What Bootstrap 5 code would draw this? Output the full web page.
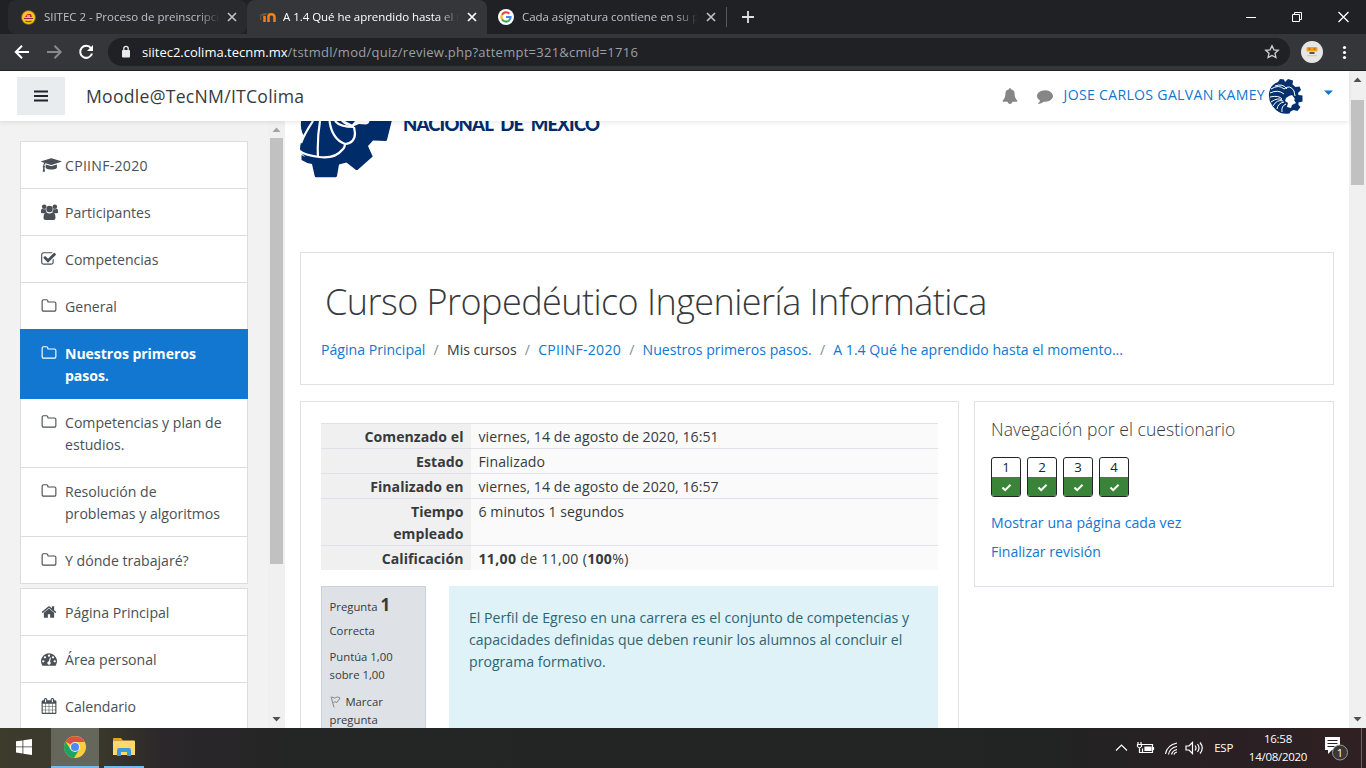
<!DOCTYPE html>
<html lang="es">
<head>
<meta charset="utf-8">
<meta name="viewport" content="width=device-width, initial-scale=1">
<title>A 1.4 Qué he aprendido hasta el momento</title>
<link href="https://cdn.jsdelivr.net/npm/bootstrap@5.3.0/dist/css/bootstrap.min.css" rel="stylesheet">
<style>
body{font-family:"Open Sans","Noto Sans",sans-serif;font-size:14.1px;line-height:22px;color:#373a3c;width:1366px;height:768px;overflow:hidden;background:#fff}
a{color:#1177d1;text-decoration:none}
.fa{width:16px;height:16px;fill:currentColor;flex:none;overflow:visible}
/* browser window */
.tabstrip{height:34px;background:#202124;padding-left:8px;color:#fff}
.tab{width:239px;height:34px;padding:0 10px 0 13px;border-radius:8px 8px 0 0;font-size:11.5px;color:#bdc1c6;letter-spacing:-.04px}
.tab.hov{background:#292a2d;border-radius:8px}
.tab.act{background:#35363a;color:#fff;width:240px}
.tab svg{flex:none}
.tab .ttl{white-space:nowrap;overflow:hidden;width:177px;margin-left:7px;-webkit-mask-image:linear-gradient(90deg,#000 154px,transparent 176px);mask-image:linear-gradient(90deg,#000 154px,transparent 176px)}
.toolbar{height:37px;background:#35363a;border-bottom:1px solid #232326}
.omni{height:28px;width:1182px;margin-left:13px;border-radius:14px;background:#202124;font-size:13px;color:#9aa0a6;padding:0 10px 0 12px}
.url{margin-left:10px;letter-spacing:.26px}
.omni b{font-weight:400;color:#fff;letter-spacing:0}
.viewport{height:657px}
/* moodle navbar */
.topnav{height:50px;width:1349px;background:#fff;box-shadow:0 2px 4px rgba(0,0,0,.08);position:relative;z-index:2;padding-left:17px}
.burger{width:48px;height:38px;background:#e9ecef;color:#212529}
.site{font-size:17.6px;color:#373a3c;margin-left:21px;letter-spacing:.27px}
.user{letter-spacing:.3px}
.content{height:607px;overflow:hidden}
/* scrollbars */
.sbar{width:17px;background:#f0f0f0;flex:none}
.sbar i{display:block;width:13px;background:#c1c1c1}
.arr{height:17px;flex:none}
/* drawer */
.drawer{width:285px;background:#f2f2f2;flex:none}
.drawer nav{width:228px;margin:20px 20px 0 20px;flex:none}
.menu{--bs-list-group-border-radius:0;--bs-list-group-border-color:#dcdddf;--bs-list-group-color:#495057;--bs-list-group-active-bg:#1177d1;--bs-list-group-active-border-color:#1177d1;border-radius:0}
.menu .list-group-item{padding:13px 20px 11px 20px;display:flex;border-radius:0}
.menu .list-group-item.active{font-weight:700;margin-top:-1px;color:#fff;letter-spacing:-.06px}
.menu .fa{margin-right:8px;margin-top:2px}
.code{letter-spacing:.27px}
.panel{border:1px solid #dee2e6}
.main-col{width:1064px;padding:0 15px}
.ctitle{font-size:36px;font-weight:300;line-height:44px;letter-spacing:-.55px;color:#373a3c;padding-left:24px}
.crumb{padding-left:20px}
.crumb span{white-space:nowrap}
.crumb .sep{color:#868e96;padding:0 8.2px}
.qtable{width:617px;table-layout:fixed;border-collapse:collapse}
.qtable th{width:150px;background:#f0f0f0;text-align:right;vertical-align:top;padding:2px 7.5px 0;border-top:1px solid #dee2e6;letter-spacing:.05px}
.qtable td{background:#fafafa;padding:2px 7.5px 0;vertical-align:top;border-top:1px solid #dee2e6;letter-spacing:.05px}
.qtable tr{height:25px}
.qinfo{width:105px;height:160px;background:#dee2e6;border:1px solid #cad0d7;padding:10px 7.5px;font-size:11.3px;line-height:18px}
.qinfo b{font-size:17px;line-height:16px}
.qtext{width:489px;height:160px;background:#def2f8;color:#2f6473;padding:21px 0 0 20px;letter-spacing:.02px}
.navh{font-size:17.5px;font-weight:300;letter-spacing:.06px;line-height:24px}
.qn{width:30px;height:40px;border:1px solid #212529;border-radius:3px;overflow:hidden;text-align:center;line-height:19px;font-size:13.2px;color:#212529}
.qn .ok{height:20px;background:#398439;display:flex;align-items:center;justify-content:center}
/* taskbar */
.taskbar{height:40px;color:#fff;background:linear-gradient(90deg,#3d3b2c 0,#3a382c 100px,#2b272a 165px,#242525 300px,#222323 1050px,#292023 1220px,#302024 1366px)}
.tbtn{width:48px;height:40px;border-bottom:2px solid transparent}
.clock{font-size:11.5px;line-height:18px;letter-spacing:-.27px;text-align:center;width:62px}
</style>
</head>
<body>
<svg class="d-none">
<symbol id="folder" viewBox="0 0 1792 1792"><path d="M1600 1312v-704q0-40-28-68t-68-28h-704q-40 0-68-28t-28-68v-64q0-40-28-68t-68-28h-320q-40 0-68 28t-28 68v960q0 40 28 68t68 28h1216q40 0 68-28t28-68zm128-704v704q0 92-66 158t-158 66h-1216q-92 0-158-66t-66-158v-960q0-92 66-158t158-66h320q92 0 158 66t66 158v32h672q92 0 158 66t66 158z"/></symbol>
<symbol id="close" viewBox="0 0 10 10"><path d="M1 1l8 8M9 1l-8 8" stroke="currentColor" stroke-width="1.7"/></symbol>
<symbol id="up" viewBox="0 0 17 17"><path d="M4.500 11h8L8.500 6.500z"/></symbol>
<symbol id="check" viewBox="0 0 12 10"><path d="M1.500 5l3 3 6-6" fill="none" stroke="#fff" stroke-width="2.200"/></symbol>
</svg>

<header>
  <div class="tabstrip d-flex align-items-center">
    <div class="tab hov d-flex align-items-center">
      <svg width="15" height="15" viewBox="0 0 15 15"><circle cx="7.500" cy="7.500" r="7" fill="#f6c51c" stroke="#7b4a2d" stroke-width=".8"/><path d="M4 7l2.500-3h3.500l1 3z" fill="#d2232a"/><path d="M3 8.500h9M4.500 11q3 1.500 6 0" stroke="#8b2252" stroke-width="1.100" fill="none"/><path d="M6 6h3" stroke="#fff"/></svg>
      <span class="ttl" style="margin-left:8px;width:176px">SIITEC 2 - Proceso de preinscripción</span>
      <svg class="ms-auto" width="10" height="10"><use href="#close"/></svg>
    </div>
    <div class="tab act d-flex align-items-center">
      <svg width="16" height="16" viewBox="0 0 16 16"><path d="M4.500 13V7M8.500 13V7.500q0-2.200 2.900-2.200T14.500 8v5" fill="none" stroke="#f98012" stroke-width="2.500"/><path d="M0 5.500l5-1.500 3 1-4.500 2z" fill="#6b5a4c"/><path d="M.7 6v5" stroke="#6b5a4c"/></svg>
      <span class="ttl" style="width:176px">A 1.4 Qué he aprendido hasta el momento</span>
      <svg class="ms-auto" width="10" height="10"><use href="#close"/></svg>
    </div>
    <div class="tab d-flex align-items-center" style="padding-left:11px">
      <svg width="16" height="16" viewBox="0 0 16 16"><circle cx="8" cy="8" r="8" fill="#fff"/><g fill="none" stroke-width="2.100"><path d="M11.300 4.700A4.600 4.600 0 0 0 4 5.700" stroke="#ea4335"/><path d="M4 5.700a4.600 4.600 0 0 0 0 4.600" stroke="#fbbc05"/><path d="M4 10.300a4.600 4.600 0 0 0 7 1.200" stroke="#34a853"/><path d="M11 11.500A4.600 4.600 0 0 0 12.600 8H8" stroke="#4285f4"/></g></svg>
      <span class="ttl" style="margin-left:8px">Cada asignatura contiene en su plan</span>
      <svg class="ms-auto" width="10" height="10"><use href="#close"/></svg>
    </div>
    <svg width="40" height="20" viewBox="0 0 40 20" fill="none"><path d="M.5 0v20" stroke="#55575b"/><path d="M22 4v12M16 10h12" stroke="#dfe1e5" stroke-width="1.800"/></svg>
    <svg class="ms-auto me-3" width="104" height="12" viewBox="0 0 104 12" fill="none" stroke="#fff"><path d="M0 6.500h10M46.500 3.500h7v7h-7zM48.500 3.500v-2h7v7h-2"/><path d="M92.500 1l10 10M102.500 1l-10 10" stroke-width="1.300"/></svg>
  </div>
  <div class="toolbar d-flex align-items-center">
    <svg width="95" height="18" viewBox="0 0 95 18" fill="none" stroke-width="2"><path d="M29 9H16.500M22 2.800L15.800 9l6.200 6.200" stroke="#fff"/><path d="M47 9h13M54.500 2.800L60.700 9l-6.200 6.200" stroke="#87898c"/><path d="M91 5.200A6 6 0 1 0 92 10.500" stroke="#fff"/><path d="M93 2v6h-6z" fill="#fff"/></svg>
    <div class="omni d-flex align-items-center">
      <svg width="12" height="14" viewBox="0 0 12 14"><rect x="2" y="5" width="8" height="7.500" rx="1" fill="#e8eaed"/><path d="M3.800 5V3.500a2.200 2.200 0 0 1 4.400 0V5" fill="none" stroke="#e8eaed" stroke-width="1.300"/></svg>
      <span class="text-nowrap url"><b>siitec2.colima.tecnm.mx</b>/tstmdl/mod/quiz/review.php?attempt=321&amp;cmid=1716</span>
      <svg class="ms-auto" width="16" height="16" viewBox="0 0 16 16"><path d="M8 1.800l1.900 4 4.400.5-3.300 3 .9 4.300L8 11.400l-3.900 2.200.9-4.300-3.300-3 4.400-.5z" fill="none" stroke="#d0d2d5" stroke-width="1.300"/></svg>
    </div>
    <svg class="ms-auto" style="margin-right:15px" width="50" height="22" viewBox="0 0 50 22"><circle cx="11" cy="11" r="11" fill="#e6e6e6"/><rect x="5.500" y="6" width="11" height="4.500" rx="1.500" fill="#f0a01e"/><path d="M7.500 8h2m3 0h2" stroke="#8d4c0b" stroke-width="1.200"/><path d="M8.500 12h5" stroke="#555" stroke-width="2"/><path d="M6 14.700h10" stroke="#f0c987" stroke-width="1.300"/><g fill="#fff"><circle cx="43.500" cy="6.500" r="1.600"/><circle cx="43.500" cy="11.500" r="1.600"/><circle cx="43.500" cy="16.500" r="1.600"/></g></svg>
  </div>
</header>

<div class="viewport d-flex">
  <div class="flex-grow-1">
    <nav class="topnav d-flex align-items-center">
      <div class="burger d-flex align-items-center justify-content-center"><svg width="14" height="12" viewBox="0 0 14 12"><path d="M.5 1.500h13M.5 6h13M.5 10.500h13" stroke="#212529" stroke-width="2" stroke-linecap="round"/></svg></div>
      <span class="site">Moodle@TecNM/ITColima</span>
      <div class="ms-auto d-flex align-items-center" style="padding-right:16px">
        <svg class="fa" style="color:#868686;margin-right:19px" viewBox="0 0 1792 1792"><path d="M1728 1408q0 52-38 90t-90 38h-448q0 106-75 181t-181 75-181-75-75-181h-448q-52 0-90-38t-38-90q50-42 91-88t85-119.500 74.500-158.500 50-206 19.500-260q0-152 117-282.500t307-158.500q-8-19-8-39 0-40 28-68t68-28 68 28 28 68q0 20-8 39 190 28 307 158.500t117 282.500q0 139 19.500 260t50 206 74.500 158.500 85 119.500 91 88z"/></svg>
        <svg class="fa" style="color:#868686;margin-right:11px" viewBox="0 0 1792 1792"><path d="M1792 896q0 174-120 321.500t-326 233-450 85.500q-70 0-145-8-198 175-460 242-49 14-114 22-17 2-30.500-9t-17.500-29v-1q-3-4-.5-12t2-10 4.500-9.500l6-9 7-8.500 8-9q7-8 31-34.500t34.500-38 31-39.500 32.500-51 27-59 26-76q-157-89-247.500-220t-90.500-281q0-130 71-248.500t191-204.500 286-136.500 348-50.500q244 0 450 85.500t326 233 120 321.500z"/></svg>
        <a class="user text-nowrap" href="#" style="margin-top:-3px">JOSE CARLOS GALVAN KAMEY</a>
        <svg style="margin-left:3px" width="35" height="36" viewBox="0 0 35 36"><path d="M10 4l2-3 4 .5L17 4l3-3 5 1.500-.5 4 3 2.500 4-.5L33 12l-3 3 .5 2 4 .5v6l-4 1 0 2.500 2 2-3 4-4-1-3 1.500-1 2Q14 37 8 32 0 25 1 15q1-8 9-11z" fill="#06316c"/><g fill="none" stroke="#fff" stroke-width="1"><path d="M3 11q8-5 13 0 6-5 10 2l1 5M2 15q8-4 14 1M2 19q9-2 12 2M3 24q7-5 11-2M5 28q4-7 10-5M9 31q1-6 7-7M14 34q-1-6 4-8M7 8q8-3 12 3"/></g><path d="M18 20l3-2 3-1 3 4-1 1 2 3-4 2-1 3-4-1 1-4-3-2z" fill="#fff"/></svg>
        <svg style="margin-left:21px;margin-top:-7px" width="9" height="6" viewBox="0 0 9 6"><path d="M0 .5h9L4.500 5z" fill="#1177d1"/></svg>
      </div>
    </nav>
    <div class="content d-flex">
      <aside class="drawer d-flex">
        <nav>
          <div class="list-group menu mb-1">
            <a class="list-group-item" href="#"><svg class="fa" viewBox="0 0 1792 1792"><path d="M1774 836l18 316q4 69-82 128t-235 93.500-323 34.500-323-34.500-235-93.500-82-128l18-316 574 181q22 7 48 7t48-7zm530-324q0 23-22 31l-1120 352q-4 1-10 1t-10-1l-652-206q-43 34-71 111.500t-34 178.500q63 36 63 109 0 69-58 107l58 433q2 14-8 25-9 11-24 11h-192q-15 0-24-11-10-11-8-25l58-433q-58-38-58-107 0-73 65-111 11-207 98-330l-333-104q-22-8-22-31t22-31l1120-352q4-1 10-1t10 1l1120 352q22 8 22 31z"/></svg><span class="code">CPIINF-2020</span></a>
            <a class="list-group-item" href="#"><svg class="fa" viewBox="0 0 16 16"><circle cx="3.200" cy="2.700" r="2.300"/><circle cx="13.800" cy="2.700" r="2.300"/><circle cx="8.500" cy="5" r="3.200"/><path d="M0 8.500V7q0-2.500 1.500-2.300 1.700 1 3.200.2Q4.600 7 6 8.300 4.500 8.300 3.500 9.200H1.200Q0 9.200 0 8.500zM17 8.500V7q0-2.500-1.500-2.300-1.700 1-3.200.2Q12.400 7 11 8.300q1.500 0 2.500.9h2.300q1.200 0 1.200-.7zM2.500 14q0-5.500 2.900-5.500 3.100 2 6.200 0 2.900 0 2.900 5.500 0 2-2 2h-8q-2 0-2-2z"/></svg><span>Participantes</span></a>
            <a class="list-group-item" href="#"><svg class="fa" viewBox="50 0 1792 1792"><path d="M1472 930v318q0 119-84.500 203.500t-203.500 84.500h-832q-119 0-203.500-84.500t-84.500-203.500v-832q0-119 84.500-203.500t203.500-84.500h832q63 0 117 25 15 7 18 23 3 17-9 29l-49 49q-10 10-23 10-3 0-9-2-23-6-45-6h-832q-66 0-113 47t-47 113v832q0 66 47 113t113 47h832q66 0 113-47t47-113v-254q0-13 9-22l64-64q10-10 23-10 6 0 12 3 20 8 20 29zm231-489l-814 814q-24 24-57 24t-57-24l-430-430q-24-24-24-57t24-57l110-110q24-24 57-24t57 24l263 263 647-647q24-24 57-24t57 24l110 110q24 24 24 57t-24 57z"/></svg><span>Competencias</span></a>
            <a class="list-group-item" href="#"><svg class="fa"><use href="#folder"/></svg><span>General</span></a>
            <a class="list-group-item active" href="#"><svg class="fa"><use href="#folder"/></svg><span>Nuestros primeros pasos.</span></a>
            <a class="list-group-item" href="#"><svg class="fa"><use href="#folder"/></svg><span>Competencias y plan de estudios.</span></a>
            <a class="list-group-item" href="#"><svg class="fa"><use href="#folder"/></svg><span>Resolución de<br>problemas y algoritmos</span></a>
            <a class="list-group-item" href="#"><svg class="fa"><use href="#folder"/></svg><span>Y dónde trabajaré?</span></a>
          </div>
          <div class="list-group menu">
            <a class="list-group-item" href="#"><svg class="fa" viewBox="0 0 1792 1792"><path d="M1472 992v480q0 26-19 45t-45 19h-384v-384h-256v384h-384q-26 0-45-19t-19-45v-480q0-1 .5-3t.5-3l575-474 575 474q1 2 1 6zm223-69l-62 74q-8 9-21 11h-3q-13 0-21-7l-692-577-692 577q-12 8-24 7-13-2-21-11l-62-74q-8-10-7-23.500t11-21.500l719-599q32-26 76-26t76 26l244 204v-195q0-14 9-23t23-9h192q14 0 23 9t9 23v408l219 182q10 8 11 21.500t-7 23.500z"/></svg><span>Página Principal</span></a>
            <a class="list-group-item" href="#"><svg class="fa" viewBox="0 0 1792 1792"><path d="M384 1152q0-53-37.500-90.500t-90.500-37.500-90.500 37.500-37.500 90.500 37.500 90.500 90.500 37.500 90.500-37.500 37.500-90.500zm192-448q0-53-37.500-90.500t-90.500-37.500-90.500 37.500-37.500 90.500 37.500 90.500 90.500 37.500 90.500-37.500 37.500-90.500zm428 481l101-382q6-26-7.500-48.500t-38.500-29.500-48 6.500-30 39.500l-101 382q-60 5-107 43.500t-63 98.500q-20 77 20 146t117 89 146-20 89-117q16-60-6-117t-72-91zm660-33q0-53-37.500-90.500t-90.500-37.500-90.500 37.500-37.500 90.500 37.500 90.500 90.500 37.500 90.500-37.500 37.500-90.500zm-640-640q0-53-37.500-90.500t-90.500-37.500-90.500 37.500-37.500 90.500 37.500 90.500 90.500 37.500 90.500-37.500 37.500-90.500zm448 192q0-53-37.500-90.500t-90.500-37.500-90.500 37.500-37.500 90.500 37.500 90.500 90.500 37.500 90.500-37.500 37.500-90.500zm320 448q0 261-141 483-19 29-54 29h-1402q-35 0-54-29-141-221-141-483 0-182 71-348t191-286 286-191 348-71 348 71 286 191 191 286 71 348z"/></svg><span>Área personal</span></a>
            <a class="list-group-item" href="#"><svg class="fa" viewBox="0 0 1792 1792"><path d="M192 1664h288v-288h-288v288zm352 0h320v-288h-320v288zm-352-352h288v-320h-288v320zm352 0h320v-320h-320v320zm-352-384h288v-288h-288v288zm736 736h320v-288h-320v288zm-384-736h320v-288h-320v288zm768 736h288v-288h-288v288zm-384-352h320v-320h-320v320zm-352-864v-288q0-13-9.500-22.500t-22.500-9.500h-64q-13 0-22.500 9.500t-9.500 22.500v288q0 13 9.500 22.500t22.500 9.500h64q13 0 22.500-9.500t9.500-22.500zm736 864h288v-320h-288v320zm-384-384h320v-288h-320v288zm384 0h288v-288h-288v288zm32-480v-288q0-13-9.500-22.500t-22.500-9.500h-64q-13 0-22.500 9.500t-9.500 22.500v288q0 13 9.500 22.500t22.500 9.500h64q13 0 22.500-9.500t9.500-22.500zm384-64v1280q0 52-38 90t-90 38h-1408q-52 0-90-38t-38-90v-1280q0-52 38-90t90-38h128v-96q0-66 47-113t113-47h64q66 0 113 47t47 113v96h384v-96q0-66 47-113t113-47h64q66 0 113 47t47 113v96h128q52 0 90 38t38 90z"/></svg><span>Calendario</span></a>
          </div>
        </nav>
        <div class="sbar d-flex flex-column align-items-center">
          <svg class="arr" width="17" fill="#a3a3a3"><use href="#up"/></svg>
          <i style="height:426px"></i>
          <svg class="arr mt-auto" width="17" fill="#505050" style="transform:rotate(180deg)"><use href="#up"/></svg>
        </div>
      </aside>
      <main class="main-col">
        <svg class="d-block" width="310" height="131" viewBox="0 0 310 131">
          <path d="M1 0H91.700L87 19Q86.500 20 85.500 20L73 19.500 68 25 72.700 35.500 57.500 49H56L46.500 41.500 39 43.500 37 55Q36.500 56.300 35.500 56.300H16Q15 56.300 14.700 55L12 43Q6 42 1.500 39V34Q8 38 2 33L0 28Q0 22 4 15 0 9 1 0z" fill="#002c6a"/>
          <g fill="none" stroke="#fff" stroke-width="2.200"><path d="M13 0Q5 12 1 22M0 30Q4 34 19 36 35 38 42 29 45 27 45 22M20 0Q17 18 18 36M29.500 0Q32 18 45 23 55 22 55 12L54 6M35 0Q40 6 54 6"/></g>
          <path d="M41 0H69.500Q69 3 66 3.500L59 3 53 5.500Q45 5 41 0z" fill="#fff"/><path d="M45 0h10l-3 3.500z" fill="#002c6a"/>
          <text x="103" y="10" textLength="197" font-family="Lato,sans-serif" font-weight="900" font-size="18.500" word-spacing="4" fill="#002c6a">NACIONAL DE MÉXICO</text>
        </svg>
        <div class="panel" style="height:133px;padding-top:27px">
          <h1 class="ctitle mb-0">Curso Propedéutico Ingeniería Informática</h1>
          <div class="crumb d-flex" style="margin-top:15px"><span><a href="#">Página Principal</a></span><span class="sep">/</span><span>Mis cursos</span><span class="sep">/</span><a class="code" href="#">CPIINF-2020</a><span class="sep">/</span><a href="#">Nuestros primeros pasos.</a><span class="sep">/</span><a href="#">A 1.4 Qué he aprendido hasta el momento...</a></div>
        </div>
        <div class="d-flex align-items-start" style="margin-top:16px;gap:15px">
          <section class="panel" style="width:659px;height:360px;padding:21px 20px">
            <table class="qtable">
              <tr><th>Comenzado el</th><td>viernes, 14 de agosto de 2020, 16:51</td></tr>
              <tr><th>Estado</th><td>Finalizado</td></tr>
              <tr><th>Finalizado en</th><td>viernes, 14 de agosto de 2020, 16:57</td></tr>
              <tr><th>Tiempo<br>empleado</th><td>6 minutos 1 segundos</td></tr>
              <tr style="height:24px"><th style="line-height:21px">Calificación</th><td style="letter-spacing:.3px;line-height:21px"><b>11,00</b> de 11,00 (<b>100</b>%)</td></tr>
            </table>
            <div class="d-flex" style="margin-top:16px;gap:23px">
              <div class="qinfo">
                <div>Pregunta <b>1</b></div>
                <div style="margin-top:6px">Correcta</div>
                <div style="margin-top:8px">Puntúa 1,00<br>sobre 1,00</div>
                <div style="margin-top:9px"><svg width="12" height="12" viewBox="0 0 12 12" fill="none" stroke="#868686" style="margin-right:1px"><path d="M1 .5l3 11M2 1q3 2 4 .5t4 .5L7 6.500q-2-1.500-3.500 0"/></svg> Marcar<br>pregunta</div>
              </div>
              <div class="qtext">El Perfil de Egreso en una carrera es el conjunto de competencias y<br>capacidades definidas que deben reunir los alumnos al concluir el<br>programa formativo.</div>
            </div>
          </section>
          <section class="panel" style="width:360px;height:186px;padding:15px 16px">
            <h2 class="navh mb-0">Navegación por el cuestionario</h2>
            <div class="d-flex" style="gap:6px;margin-top:16px">
              <div class="qn">1<div class="ok"><svg width="11" height="9"><use href="#check"/></svg></div></div>
              <div class="qn">2<div class="ok"><svg width="11" height="9"><use href="#check"/></svg></div></div>
              <div class="qn">3<div class="ok"><svg width="11" height="9"><use href="#check"/></svg></div></div>
              <div class="qn">4<div class="ok"><svg width="11" height="9"><use href="#check"/></svg></div></div>
            </div>
            <div style="margin-top:15px;letter-spacing:.06px"><a href="#">Mostrar una página cada vez</a></div>
            <div style="margin-top:7px"><a href="#">Finalizar revisión</a></div>
          </section>
        </div>
      </main>
    </div>
  </div>
  <div class="sbar d-flex flex-column align-items-center">
    <svg class="arr" width="17" fill="#505050"><use href="#up"/></svg>
    <i style="height:85px;margin-top:12px"></i>
    <svg class="arr mt-auto" width="17" fill="#505050" style="transform:rotate(180deg)"><use href="#up"/></svg>
  </div>
</div>

<footer class="taskbar d-flex align-items-center">
  <div class="tbtn d-flex align-items-center justify-content-center"><svg width="16" height="16" viewBox="0 0 16 16" fill="#fff"><path d="M0 2.300l6.500-.9v6.100H0zM7.300 1.300L16 0v7.500H7.300zM0 8.300h6.500v6.200L0 13.600zM7.300 8.300H16V16l-8.700-1.300z"/></svg></div>
  <div class="tbtn d-flex align-items-center justify-content-center" style="background:#66675b;border-color:#76b9ed;margin-left:3px"><svg width="22" height="22" viewBox="0 0 22 22"><circle cx="11" cy="11" r="11" fill="#ffcd40"/><path d="M11 11L1.500 5.500A11 11 0 0 1 20.600 6H11z" fill="#dd5144"/><path d="M1.500 5.500A11 11 0 0 0 10 22l5.300-8.500L11 11 6.500 13.500z" fill="#1da462"/><circle cx="11" cy="11" r="5" fill="#f1f1f1"/><circle cx="11" cy="11" r="4" fill="#4c8bf5"/></svg></div>
  <div class="tbtn d-flex align-items-center justify-content-center" style="width:40px;border-color:#76b9ed;margin-left:5px"><svg width="22" height="18" viewBox="0 0 22 18"><path d="M0 1q0-1 1-1h7l2 2.500H0z" fill="#e8a317"/><path d="M0 2.500h21q1 0 1 1V17H0z" fill="#ffd86b"/><path d="M4 18v-6q0-2 2-2h10q2 0 2 2v6h-4v-4H8v4z" fill="#3c99db"/></svg></div>
  <svg class="ms-auto" width="90" height="20" viewBox="0 0 90 20" fill="none" stroke="#fff" stroke-width="1.200"><path d="M1 12.500l5.500-5.500 5.500 5.500"/><path d="M26.500 6.500h11v8h-10v-4M38.500 9v3M23 4v2M26 4v2M22.500 6.500h4v2q-2 2.500-4 0zM24.500 10v4.500h3"/><path d="M30 9h6v3.500h-6z" fill="#fff"/><path d="M50.500 16Q52 7 62 5M53.500 16.500q1-6.500 8.500-8M56.500 16.500q1-4 5.500-5M59 16.500q.5-2 3-2.500"/><path d="M71 8h3l3.500-3.500v11L74 12h-3zM80 7.500q2 2.500 0 5M82.500 6q3 4 0 8M85 4.500q4.500 5.500 0 11"/></svg>
  <span style="font-size:11.5px;margin-left:9px;letter-spacing:-.3px" class="esp">ESP</span>
  <div class="clock" style="margin-left:14px">16:58<br>14/08/2020</div>
  <svg style="margin-left:14px" width="27" height="28" viewBox="0 0 27 28"><path d="M2 3h15v13H9l-4 4v-4H2z" fill="#fff"/><path d="M4.500 6.500h10M4.500 9.500h10M4.500 12.500h7" stroke="#2a2023"/><circle cx="17" cy="18.500" r="7.500" fill="#3b3638" stroke="#9b9799"/><text x="17" y="22.500" font-size="11" text-anchor="middle" fill="#fff">1</text></svg>
  <div style="width:1px;height:40px;background:#6b6466;margin:0 4px 0 11px"></div>
</footer>
<script src="https://cdn.jsdelivr.net/npm/bootstrap@5.3.0/dist/js/bootstrap.bundle.min.js"></script>
</body>
</html>
